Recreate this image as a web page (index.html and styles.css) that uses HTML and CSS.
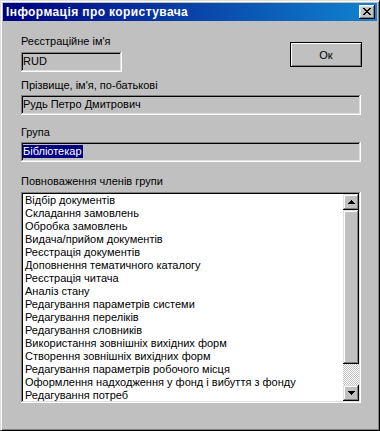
FILE: index.html
```html
<!DOCTYPE html>
<html lang="uk">

<head>
    <meta charset="UTF-8">
    <title>Інформація про користувача</title>
    <link rel="stylesheet" href="styles.css">
</head>

<body>
    <div class="window">
        <div class="titlebar">
            <span class="title">Інформація про користувача</span>
            <button class="close">
                <svg width="8" height="7" viewBox="0 0 8 7" shape-rendering="crispEdges">
                    <path fill="#000" d="M0 0h2v1H0zM6 0h2v1H6zM1 1h2v1H1zM5 1h2v1H5zM2 2h4v1H2zM3 3h2v1H3zM2 4h4v1H2zM1 5h2v1H1zM5 5h2v1H5zM0 6h2v1H0zM6 6h2v1H6z" />
                </svg>
            </button>
        </div>

        <div class="content">
            <div class="top-row">
                <div class="group">
                    <label class="label first">Реєстраційне ім'я</label>
                    <div class="field short">RUD</div>
                </div>
                <button class="btn default">Ок</button>
            </div>

            <label class="label name-label">Прізвище, ім'я, по-батькові</label>
            <div class="field">Рудь Петро Дмитрович</div>

            <label class="label group-label">Група</label>
            <div class="field"><span class="selected">Бібліотекар</span></div>

            <label class="label list-label">Повноваження членів групи</label>
            <div class="listbox">
                <ul class="items">
                    <li>Відбір документів</li>
                    <li>Складання замовлень</li>
                    <li>Обробка замовлень</li>
                    <li>Видача/прийом документів</li>
                    <li>Реєстрація документів</li>
                    <li>Доповнення тематичного каталогу</li>
                    <li>Реєстрація читача</li>
                    <li>Аналіз стану</li>
                    <li>Редагування параметрів системи</li>
                    <li>Редагування переліків</li>
                    <li>Редагування словників</li>
                    <li>Використання зовнішніх вихідних форм</li>
                    <li>Створення зовнішніх вихідних форм</li>
                    <li>Редагування параметрів робочого місця</li>
                    <li>Оформлення надходження у фонд і вибуття з фонду</li>
                    <li>Редагування потреб</li>
                </ul>
                <div class="scrollbar">
                    <div class="sb-btn">
                        <svg width="7" height="4" viewBox="0 0 7 4" shape-rendering="crispEdges">
                            <path fill="#000" d="M3 0h1v1h1v1h1v1h1v1H0V3h1V2h1V1h1z" />
                        </svg>
                    </div>
                    <div class="thumb"></div>
                    <div class="track"></div>
                    <div class="sb-btn">
                        <svg width="7" height="4" viewBox="0 0 7 4" shape-rendering="crispEdges">
                            <path fill="#000" d="M0 0h7v1H6v1H5v1H4v1H3V3H2V2H1V1H0z" />
                        </svg>
                    </div>
                </div>
            </div>
        </div>
    </div>
</body>

</html>
```

FILE: styles.css
```css
* {
    margin: 0;
    padding: 0;
    box-sizing: border-box;
}

body {
    background: #c0c0c0;
    font-family: 'Liberation Sans', Arial, sans-serif;
    font-size: 11px;
    color: #000;
}

.window {
    width: 380px;
    height: 431px;
    background: #c0c0c0;
    border: 1px solid;
    border-color: #dfdfdf #000 #000 #dfdfdf;
    box-shadow: inset 1px 1px #fff, inset -1px -1px #808080;
    padding: 2px;
    display: flex;
    flex-direction: column;
}

.titlebar {
    height: 18px;
    background: linear-gradient(to right, #000080, #1084d0);
    display: flex;
    align-items: center;
    padding: 0 2px 0 3px;
}

.title {
    color: #fff;
    font-weight: bold;
    font-size: 12px;
    letter-spacing: 0.4px;
    white-space: nowrap;
}

.close {
    margin-left: auto;
    width: 16px;
    height: 14px;
    border: none;
    background: #c0c0c0;
    box-shadow: inset -1px -1px #000, inset 1px 1px #fff, inset -2px -2px #808080, inset 2px 2px #dfdfdf;
    display: flex;
    align-items: center;
    justify-content: center;
    padding-bottom: 1px;
}

.content {
    flex: 1;
    padding: 14px 16px 0 18px;
}

.top-row {
    display: flex;
    align-items: flex-start;
}

.label {
    display: block;
    height: 13px;
    line-height: 13px;
    margin: 8px 0 3px;
    white-space: nowrap;
}

.label.first {
    margin-top: 0;
    margin-bottom: 4px;
}

.label.name-label {
    margin-top: 7px;
}

.label.group-label {
    margin-top: 11px;
}

.label.list-label {
    margin-top: 13px;
    margin-bottom: 4px;
}

.field {
    height: 20px;
    line-height: 13px;
    padding: 3px 2px;
    background: #c0c0c0;
    box-shadow: inset -1px -1px #fff, inset 1px 1px #808080, inset -2px -2px #dfdfdf, inset 2px 2px #000;
    white-space: nowrap;
    overflow: hidden;
}

.field.short {
    width: 101px;
}

.selected {
    display: inline-block;
    background: #000080;
    color: #fff;
    padding: 0 1px 0 0;
}

.btn {
    font-family: inherit;
    font-size: 11px;
    width: 72px;
    height: 25px;
    margin: 7px -1px 0 auto;
    background: #c0c0c0;
    border: 1px solid #000;
    box-shadow: inset 1px 1px #fff, inset -1px -1px #808080;
    color: #000;
}

.listbox {
    display: flex;
    height: 211px;
    padding: 2px;
    background: #fff;
    box-shadow: inset -1px -1px #fff, inset 1px 1px #808080, inset -2px -2px #dfdfdf, inset 2px 2px #000;
}

.items {
    flex: 1;
    list-style: none;
    overflow: hidden;
    padding-left: 2px;
}

.items li {
    height: 13px;
    line-height: 13px;
    white-space: nowrap;
}

.scrollbar {
    width: 16px;
    display: flex;
    flex-direction: column;
}

.sb-btn {
    height: 16px;
    background: #c0c0c0;
    box-shadow: inset -1px -1px #000, inset 1px 1px #dfdfdf, inset -2px -2px #808080, inset 2px 2px #fff;
    display: flex;
    align-items: center;
    justify-content: center;
}

.thumb {
    height: 154px;
    background: #c0c0c0;
    box-shadow: inset -1px -1px #000, inset 1px 1px #dfdfdf, inset -2px -2px #808080, inset 2px 2px #fff;
}

.track {
    flex: 1;
    background: repeating-conic-gradient(#c0c0c0 0 25%, #fff 0 50%) 0 0 / 2px 2px;
}
```
